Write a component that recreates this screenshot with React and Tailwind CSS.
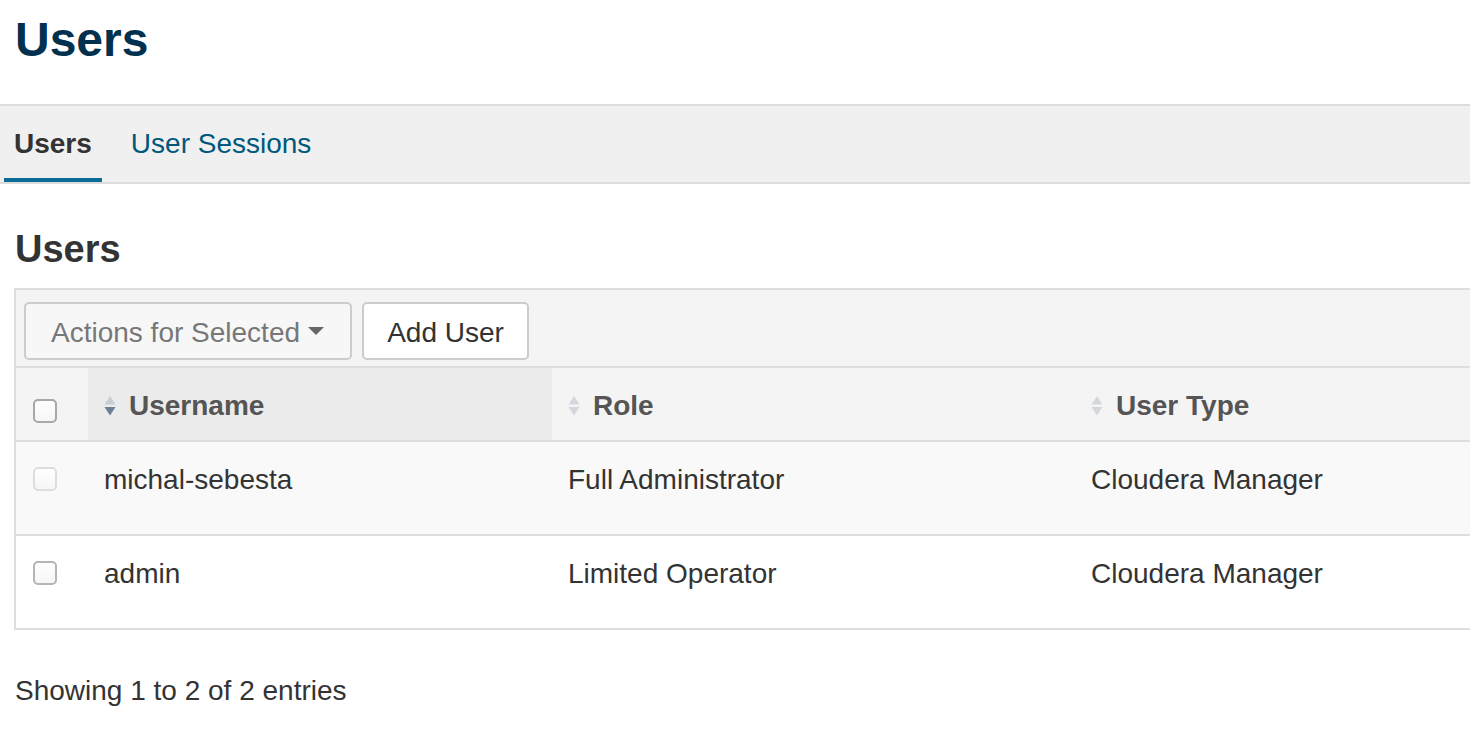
import React from 'react';

const users = [
  { id: 1, username: 'michal-sebesta', role: 'Full Administrator', type: 'Cloudera Manager', current: true },
  { id: 2, username: 'admin', role: 'Limited Operator', type: 'Cloudera Manager', current: false },
];

function SortIcon({ active }) {
  return (
    <svg width="12" height="22" viewBox="0 0 12 22" className="shrink-0">
      <path d="M6 1 L11.5 9.5 L0.5 9.5 Z" fill={active ? '#c7ced6' : '#d3d7db'} />
      <path d="M0.5 12 L11.5 12 L6 20.5 Z" fill={active ? '#6b7f96' : '#d3d7db'} />
    </svg>
  );
}

function Checkbox({ faded, dark }) {
  const border = faded ? 'border-[#dddddd]' : dark ? 'border-[#a8a8a8]' : 'border-[#b5b5b5]';
  return (
    <span
      className={`block w-[24px] h-[24px] rounded-[5px] border-2 ${border} bg-gradient-to-b from-white to-[#f6f6f6]`}
    />
  );
}

function HeaderCell({ label, active }) {
  return (
    <div className={`flex items-center gap-[13px] pl-[16px] pt-[3px] ${active ? 'bg-[#ebebeb]' : ''}`}>
      <SortIcon active={active} />
      <span className="font-bold text-[#555] text-[28px] leading-[28px]">{label}</span>
    </div>
  );
}

export default function App() {
  return (
    <div className="w-full min-h-[748px] overflow-hidden bg-white font-['Liberation_Sans',Arial,sans-serif] text-[#333]">
      {/* page title */}
      <div className="h-[104px] pt-[16px] pl-[15px]">
        <h1 className="text-[48px] leading-[48px] font-bold text-[#02304f]">Users</h1>
      </div>

      {/* tabs */}
      <div className="flex h-[80px] border-y-2 border-[#dcdcdc] bg-[#f0f0f0] pl-[4px]">
        <div className="h-full px-[10px] pt-[24px] border-b-4 border-[#0a6d98]">
          <span className="text-[28px] leading-[28px] font-bold text-[#333]">Users</span>
        </div>
        <div className="h-full ml-[19px] px-[10px] pt-[24px]">
          <span className="text-[28px] leading-[28px] text-[#00587c]">User Sessions</span>
        </div>
      </div>

      <h2 className="mt-[46px] pl-[15px] text-[38px] leading-[38px] font-bold text-[#333]">Users</h2>

      {/* table */}
      <div className="mt-[20px] ml-[14px] w-[1500px] border-2 border-[#dedede]">
        <div className="flex h-[76px] bg-[#f4f4f4] pt-[12px] pl-[8px]">
          <button className="flex items-center w-[328px] h-[58px] pl-[25px] pt-[3px] border-2 border-[#cccccc] rounded-[5px] bg-[#f7f7f7] text-[28px] text-[#777]">
            Actions for Selected
            <svg width="16" height="9" viewBox="0 0 16 9" className="ml-[8px] -mt-[3px]">
              <path d="M0 0 L16 0 L8 8 Z" fill="#666" />
            </svg>
          </button>
          <button className="flex items-center justify-center ml-[10px] w-[167px] h-[58px] pt-[3px] border-2 border-[#cccccc] rounded-[5px] bg-white text-[28px] text-[#333]">
            Add User
          </button>
        </div>

        <div className="grid grid-cols-[72px_464px_523px_1fr] h-[76px] border-y-2 border-[#dedede] bg-[#f4f4f4]">
          <div className="flex pt-[31px] pl-[17px]">
            <Checkbox dark />
          </div>
          <HeaderCell label="Username" active />
          <HeaderCell label="Role" />
          <HeaderCell label="User Type" />
        </div>

        {users.map((u, i) => (
          <div
            key={u.id}
            className={`grid grid-cols-[72px_464px_523px_1fr] text-[28px] leading-[28px] ${
              i === 0 ? 'h-[94px] border-b-2 border-[#dedede] bg-[#f9f9f9]' : 'h-[92px] bg-white'
            }`}
          >
            <div className="flex pt-[25px] pl-[17px]">
              <Checkbox faded={u.current} />
            </div>
            <div className="pl-[16px] pt-[24px]">{u.username}</div>
            <div className="pl-[16px] pt-[24px]">{u.role}</div>
            <div className="pl-[16px] pt-[24px]">{u.type}</div>
          </div>
        ))}
      </div>

      <p className="mt-[47px] pl-[15px] text-[28px] leading-[28px] text-[#333]">Showing 1 to 2 of 2 entries</p>
    </div>
  );
}
